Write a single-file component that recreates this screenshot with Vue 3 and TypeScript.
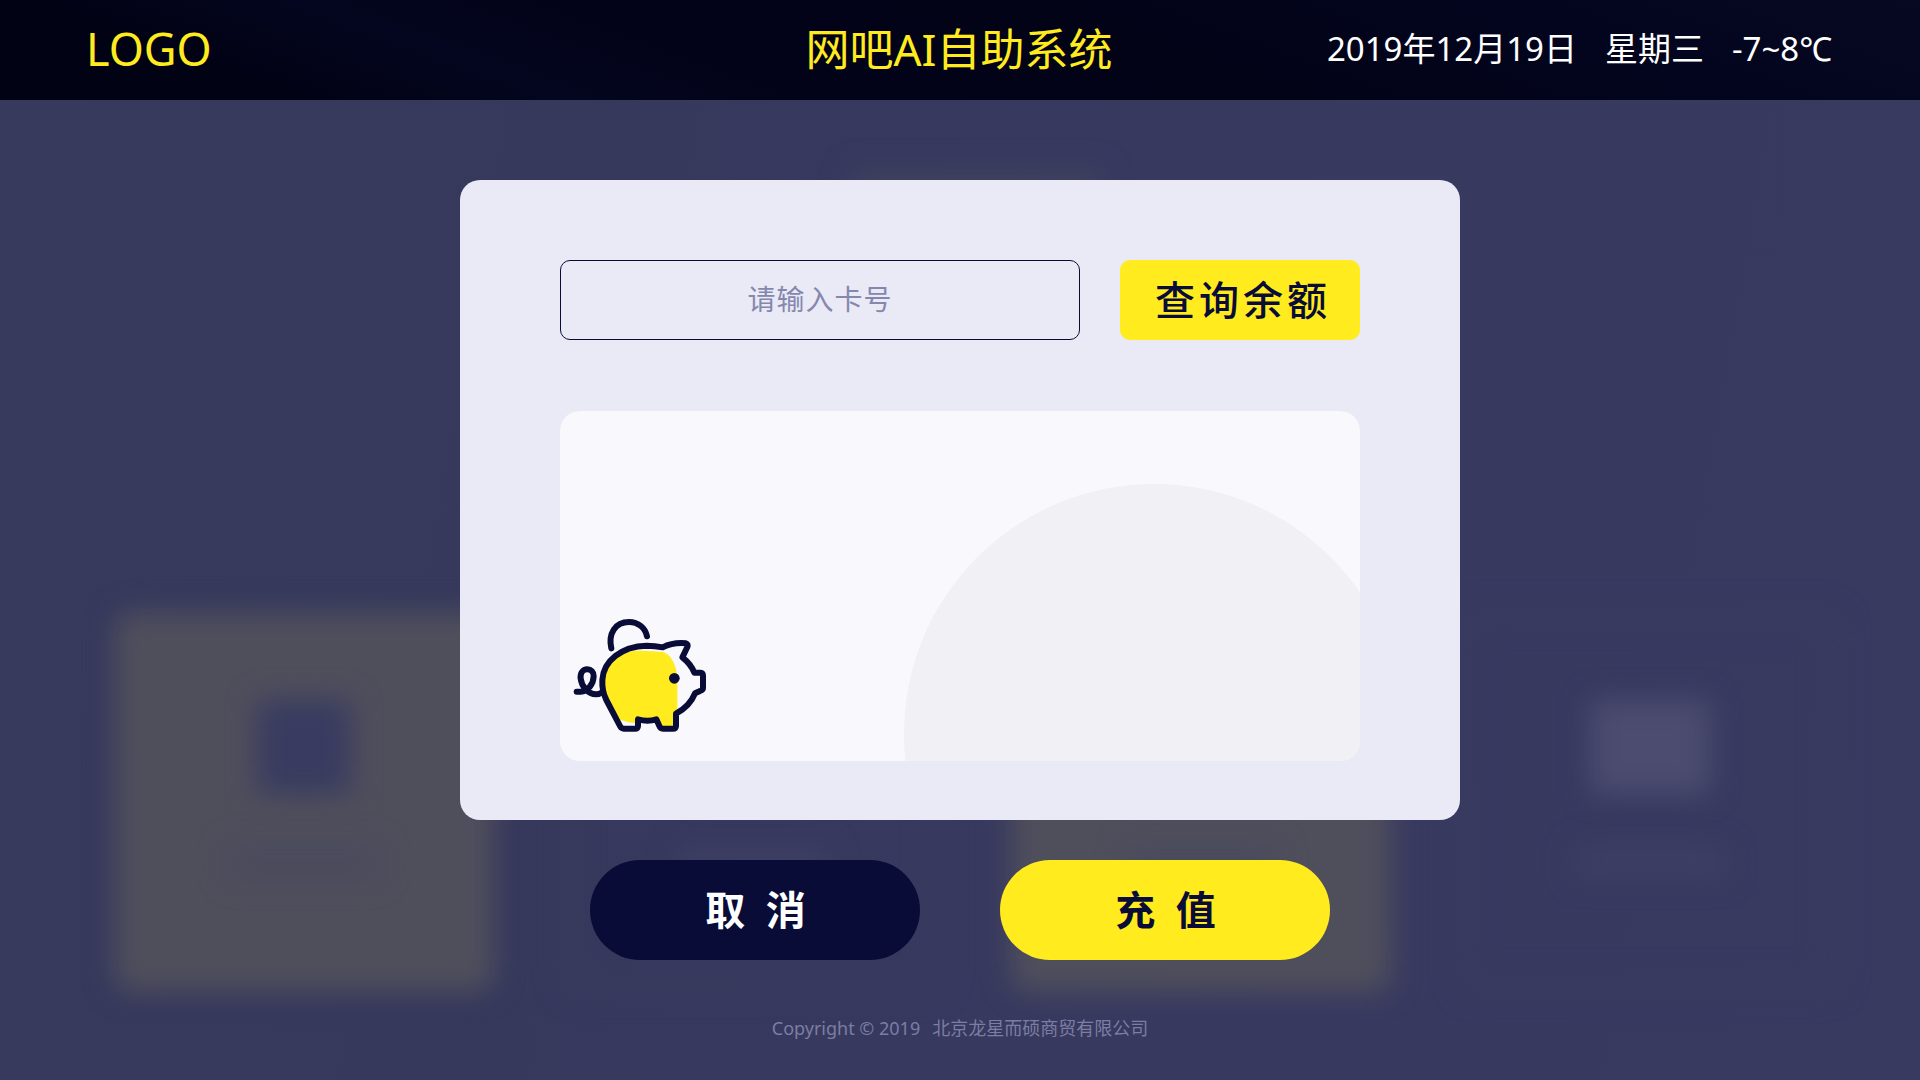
<script setup lang="ts">
import { ref } from 'vue'

interface Tile {
  id: number
  highlighted: boolean
}

const cardNumber = ref('')

const tiles: Tile[] = [
  { id: 1, highlighted: true },
  { id: 2, highlighted: false },
  { id: 3, highlighted: true },
  { id: 4, highlighted: false },
]
</script>

<template>
  <div class="page">
    <div class="backdrop" aria-hidden="true">
      <span class="backdrop-title"></span>
      <div class="tiles">
        <div v-for="tile in tiles" :key="tile.id" class="tile" :class="{ highlighted: tile.highlighted }">
          <span class="tile-icon"></span>
          <span class="tile-label"></span>
        </div>
      </div>
    </div>

    <header class="topbar">
      <span class="logo">LOGO</span>
      <h1 class="title">网吧AI自助系统</h1>
      <div class="status">
        <span>2019年12月19日</span>
        <span>星期三</span>
        <span>-7~8℃</span>
      </div>
    </header>

    <main class="content">
      <section class="dialog">
        <form class="lookup" @submit.prevent>
          <input v-model="cardNumber" class="card-input" type="text" placeholder="请输入卡号" aria-label="请输入卡号" />
          <button class="query" type="submit">查询余额</button>
        </form>
        <div class="balance">
          <svg class="piggy" viewBox="66 51 408 351" aria-hidden="true">
            <path
              fill="#ffeb1e"
              d="M160 250C163 200 198 160 250 153C285 151 320 154 342 157C368 168 376 198 382 225V340L376 380H334L320 354H260L258 370Q230 367 204 358L160 284Z"
            />
            <g fill="none" stroke="#080c37" stroke-width="18" stroke-linecap="round" stroke-linejoin="round">
              <path
                d="M338 142C362 130 386 128 408 130Q415 132 412 141L397 172C415 186 426 200 433 218H451Q459 219 459 227V264Q459 270 450 273L435 280C425 305 405 326 378 341V377Q378 386 368 386H339Q331 386 328 378L319 358C300 364 282 363 264 358V377Q264 386 254 386H222Q214 386 210 378L169 300C158 278 156 262 157 240C160 182 215 139 290 137Q315 137 338 142Z"
              />
              <path d="M184 145C174 100 196 66 237 66C265 66 286 84 291 109" />
              <path d="M80 275H92C114 275 131 250 131 228C131 215 123 208 112 208C98 208 90 219 92 236C95 260 114 282 138 283Q149 283 156 277" />
            </g>
            <circle cx="373" cy="235" r="16" fill="#080c37" />
          </svg>
        </div>
      </section>

      <div class="actions">
        <button class="action cancel" type="button">取 消</button>
        <button class="action recharge" type="button">充 值</button>
      </div>
    </main>

    <footer class="footer">
      <span>Copyright © 2019</span>
      <span>北京龙星而硕商贸有限公司</span>
    </footer>
  </div>
</template>

<style>
body {
  margin: 0;
  background: #37395e;
}
</style>

<style scoped>
.page {
  position: relative;
  display: flex;
  flex-direction: column;
  min-height: 100vh;
  overflow: hidden;
  background: linear-gradient(100deg, #37395d, #36385c 30%, #37395f 55%, #393a60);
  font-family: "Noto Sans", "Noto Sans CJK SC", sans-serif;
}

.backdrop {
  position: absolute;
  inset: 0;
  display: flex;
  flex-direction: column;
  justify-content: space-between;
  align-items: center;
  padding: 170px 80px 88px 114px;
}

.backdrop-title {
  width: 250px;
  height: 50px;
  background: #40415f;
  filter: blur(14px);
}

.tiles {
  display: flex;
  justify-content: space-between;
  width: 100%;
}

.tile {
  position: relative;
  display: flex;
  flex-direction: column;
  align-items: center;
  gap: 52px;
  box-sizing: border-box;
  width: 380px;
  height: 380px;
  padding-top: 88px;
}

.tile::before {
  content: "";
  position: absolute;
  inset: 0;
  box-sizing: border-box;
  border: 12px solid #3a3c5e;
  border-radius: 16px;
  filter: blur(14px);
}

.tile.highlighted::before {
  border: 0;
  background: #4f4f5c;
}

.tile-icon,
.tile-label {
  position: relative;
  background: #4b4c6f;
  filter: blur(14px);
}

.tile-icon {
  width: 120px;
  height: 94px;
}

.tile-label {
  width: 150px;
  height: 32px;
  background: #3e3f63;
}

.highlighted .tile-icon {
  width: 94px;
  background: #393b60;
}

.highlighted .tile-label {
  background: #494a5d;
}

.topbar {
  position: relative;
  display: grid;
  grid-template-columns: 1fr auto 1fr;
  align-items: center;
  box-sizing: border-box;
  height: 100px;
  padding: 0 88px 2px 86px;
  background: linear-gradient(20deg, #010214 8%, #010214 14%, #04061f 26%, #020318 38%, #020317 60%, #03051e 80%, #070822);
}

.logo {
  color: #ffeb1e;
  font-size: 45px;
  line-height: 60px;
}

.title {
  margin: 0;
  color: #ffeb1e;
  font-size: 44px;
  font-weight: 400;
  line-height: 60px;
}

.status {
  display: flex;
  justify-content: flex-end;
  gap: 28px;
  color: #fff;
  font-size: 33px;
  line-height: 40px;
}

.content {
  position: relative;
  display: flex;
  flex-direction: column;
  align-items: center;
  padding-top: 80px;
}

.dialog {
  box-sizing: border-box;
  width: 1000px;
  max-width: 100%;
  padding: 80px 100px 59px;
  border-radius: 20px;
  background: #e9eaf5;
}

.lookup {
  display: flex;
  gap: 40px;
}

.card-input {
  flex: 1;
  min-width: 0;
  box-sizing: border-box;
  height: 80px;
  padding: 0 20px 2px;
  border: 1px solid #080c37;
  border-radius: 10px;
  outline: 0;
  background: transparent;
  color: #080c37;
  font-family: inherit;
  font-size: 28px;
  letter-spacing: 1px;
  text-align: center;
}

.card-input::placeholder {
  color: #8687ae;
  opacity: 1;
}

.query,
.action {
  border: 0;
  padding: 0 0 4px 6px;
  font-family: inherit;
  font-size: 40px;
  cursor: pointer;
}

.query {
  width: 240px;
  height: 80px;
  border-radius: 10px;
  background: #ffeb1e;
  color: #080c37;
  font-weight: 500;
  letter-spacing: 4px;
}

.balance {
  position: relative;
  display: flex;
  align-items: flex-end;
  box-sizing: border-box;
  height: 350px;
  margin-top: 71px;
  padding: 0 0 27px 12px;
  border-radius: 20px;
  overflow: hidden;
  background: #f8f8fd;
}

.balance::before {
  content: "";
  position: absolute;
  top: 73px;
  right: -44px;
  width: 500px;
  height: 500px;
  border-radius: 50%;
  background: #f0f0f5;
}

.piggy {
  position: relative;
  width: 136px;
  height: 117px;
}

.actions {
  display: flex;
  gap: 80px;
  margin-top: 40px;
}

.action {
  width: 330px;
  height: 100px;
  border-radius: 50px;
  font-weight: 700;
  letter-spacing: 5px;
}

.cancel {
  background: #080c37;
  color: #fff;
}

.recharge {
  background: #ffeb1e;
  color: #080c37;
}

.footer {
  position: relative;
  display: flex;
  justify-content: center;
  gap: 12px;
  margin-top: 53px;
  padding-bottom: 37px;
  color: #7c7da3;
  font-size: 18px;
  line-height: 30px;
}
</style>
